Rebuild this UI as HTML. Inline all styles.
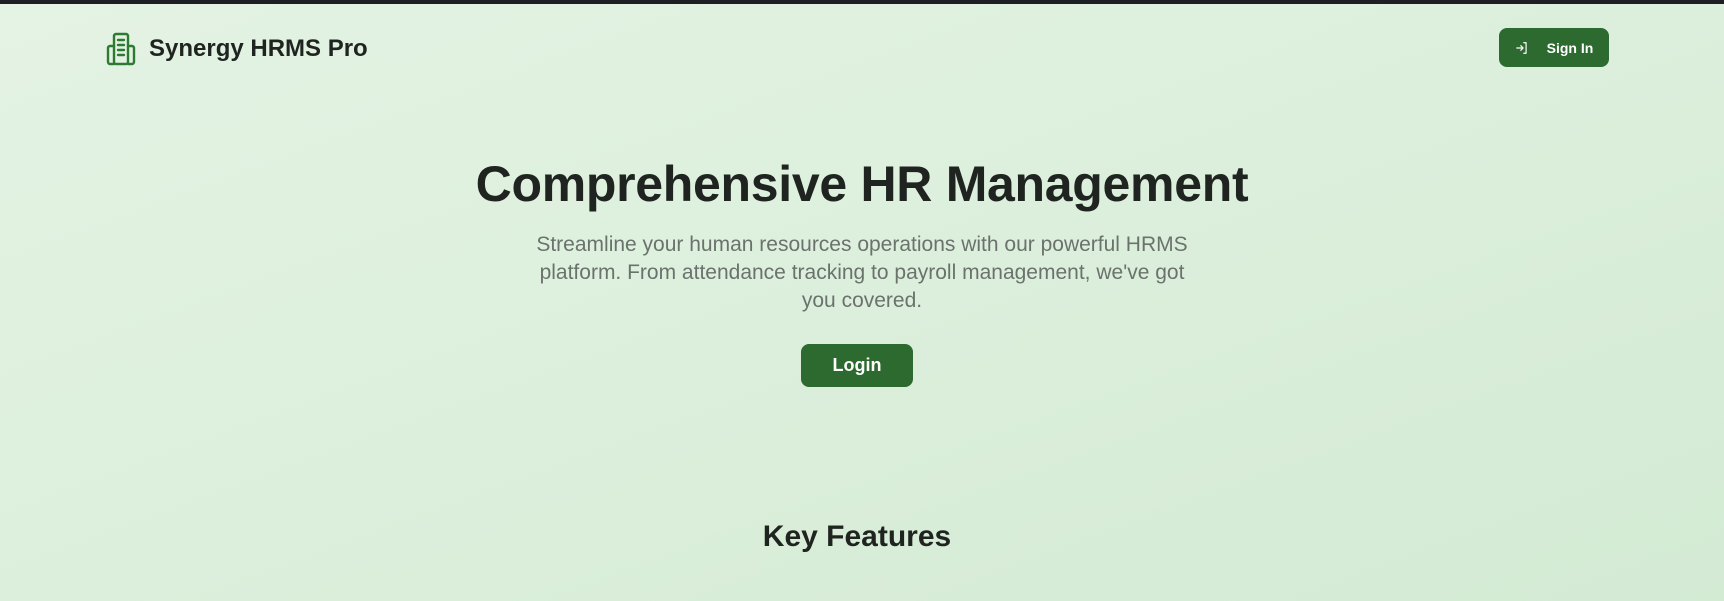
<!DOCTYPE html>
<html><head><meta charset="utf-8"><style>
*{margin:0;padding:0;box-sizing:border-box}
html,body{width:1724px;height:601px;overflow:hidden}
body{font-family:"Liberation Sans",sans-serif;background:linear-gradient(160deg,#e4f3e4 0%,#dcefdc 50%,#d3ead3 100%);position:relative;color:#1f2420;border-top:4px solid #1e1f24}
.abs{position:absolute}
.logo{left:106px;top:28px}
.brand{left:149px;top:31px;font-size:24px;font-weight:bold;color:#1f2420}
.signin{left:1499px;top:24px;width:110px;height:39px;background:#2d6a2f;border-radius:8px;color:#fff;font-size:14px;font-weight:bold;display:flex;align-items:center;justify-content:center;gap:18px}
h1{position:absolute;left:0;width:1724px;top:151px;text-align:center;font-size:50px;font-weight:bold;color:#1f2420;letter-spacing:-0.3px}
p{position:absolute;left:522px;width:680px;top:227px;text-align:center;font-size:21px;line-height:28px;color:#6b726d}
.login{left:801px;top:340px;width:112px;height:43px;background:#2d6a2f;border-radius:8px;color:#fff;font-size:18px;font-weight:bold;display:flex;align-items:center;justify-content:center}
h2{position:absolute;left:-5px;width:1724px;top:516px;text-align:center;font-size:30px;font-weight:bold;color:#1f2420}
</style></head><body>
<svg class="abs logo" width="30" height="34" viewBox="0 0 30 34" fill="none" stroke="#2f7a33" stroke-width="2.4" stroke-linejoin="round" stroke-linecap="round">
<rect x="8" y="2" width="14" height="30" rx="2"/>
<path d="M8 14H4a2 2 0 0 0-2 2v14a2 2 0 0 0 2 2h4M22 14h4a2 2 0 0 1 2 2v14a2 2 0 0 1-2 2h-4"/>
<path d="M12 8h6M12 13h6M12 18h6M12 23h6"/>
</svg>
<div class="abs brand">Synergy HRMS Pro</div>
<div class="abs signin"><svg width="14" height="14" viewBox="0 0 24 24" fill="none" stroke="#fff" stroke-width="2" stroke-linecap="round" stroke-linejoin="round"><path d="M15 3h4v18h-4M3 12h11M10 8l4 4-4 4"/></svg><span>Sign In</span></div>
<h1>Comprehensive HR Management</h1>
<p>Streamline your human resources operations with our powerful HRMS platform. From attendance tracking to payroll management, we've got you covered.</p>
<div class="abs login">Login</div>
<h2>Key Features</h2>
</body></html>
